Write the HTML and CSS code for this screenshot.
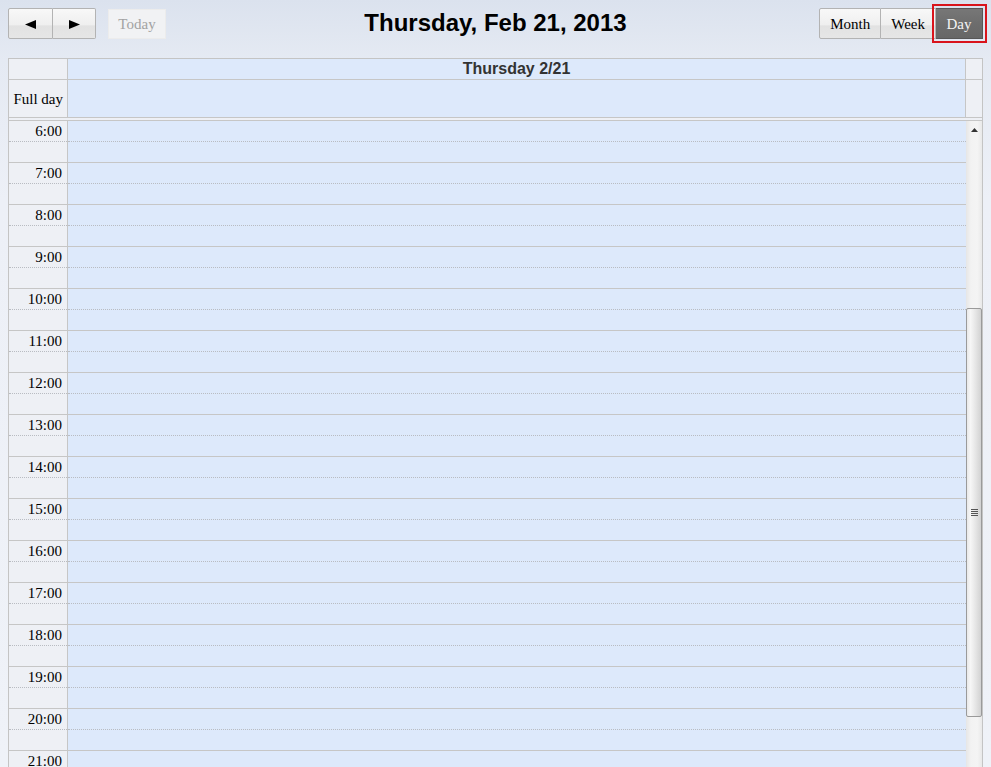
FILE: index.html
```html
<!DOCTYPE html>
<html>
<head>
<meta charset="utf-8">
<title>Calendar</title>
<link rel="stylesheet" href="styles.css">
</head>
<body>
<div class="app">
  <div class="toolbar">
    <div class="tb-left">
      <div class="group">
        <button class="btn nav"><svg width="11" height="9" viewBox="0 0 11 9"><polygon points="0,4.5 11,0 11,9" fill="#000"/></svg></button>
        <button class="btn nav"><svg width="11" height="9" viewBox="0 0 11 9"><polygon points="11,4.5 0,0 0,9" fill="#000"/></svg></button>
      </div>
      <button class="btn today" disabled>Today</button>
    </div>
    <h1 class="title">Thursday, Feb 21, 2013</h1>
    <div class="tb-right">
      <div class="group">
        <button class="btn">Month</button>
        <button class="btn">Week</button>
        <button class="btn active">Day</button>
      </div>
    </div>
  </div>

  <div class="cal">
    <div class="head">
      <div class="cell corner"></div>
      <div class="cell dayhead">Thursday 2/21</div>
      <div class="cell gutter"></div>
      <div class="cell fulllabel">Full day</div>
      <div class="cell fullday"></div>
      <div class="cell gutter"></div>
    </div>
    <div class="sep"></div>
    <div class="body">
      <div class="hours">
        <div class="hour"><div class="tcell"><div class="half">6:00</div><div class="half2"></div></div><div class="dcell"><div class="half"></div><div class="half2"></div></div></div>
        <div class="hour"><div class="tcell"><div class="half">7:00</div><div class="half2"></div></div><div class="dcell"><div class="half"></div><div class="half2"></div></div></div>
        <div class="hour"><div class="tcell"><div class="half">8:00</div><div class="half2"></div></div><div class="dcell"><div class="half"></div><div class="half2"></div></div></div>
        <div class="hour"><div class="tcell"><div class="half">9:00</div><div class="half2"></div></div><div class="dcell"><div class="half"></div><div class="half2"></div></div></div>
        <div class="hour"><div class="tcell"><div class="half">10:00</div><div class="half2"></div></div><div class="dcell"><div class="half"></div><div class="half2"></div></div></div>
        <div class="hour"><div class="tcell"><div class="half">11:00</div><div class="half2"></div></div><div class="dcell"><div class="half"></div><div class="half2"></div></div></div>
        <div class="hour"><div class="tcell"><div class="half">12:00</div><div class="half2"></div></div><div class="dcell"><div class="half"></div><div class="half2"></div></div></div>
        <div class="hour"><div class="tcell"><div class="half">13:00</div><div class="half2"></div></div><div class="dcell"><div class="half"></div><div class="half2"></div></div></div>
        <div class="hour"><div class="tcell"><div class="half">14:00</div><div class="half2"></div></div><div class="dcell"><div class="half"></div><div class="half2"></div></div></div>
        <div class="hour"><div class="tcell"><div class="half">15:00</div><div class="half2"></div></div><div class="dcell"><div class="half"></div><div class="half2"></div></div></div>
        <div class="hour"><div class="tcell"><div class="half">16:00</div><div class="half2"></div></div><div class="dcell"><div class="half"></div><div class="half2"></div></div></div>
        <div class="hour"><div class="tcell"><div class="half">17:00</div><div class="half2"></div></div><div class="dcell"><div class="half"></div><div class="half2"></div></div></div>
        <div class="hour"><div class="tcell"><div class="half">18:00</div><div class="half2"></div></div><div class="dcell"><div class="half"></div><div class="half2"></div></div></div>
        <div class="hour"><div class="tcell"><div class="half">19:00</div><div class="half2"></div></div><div class="dcell"><div class="half"></div><div class="half2"></div></div></div>
        <div class="hour"><div class="tcell"><div class="half">20:00</div><div class="half2"></div></div><div class="dcell"><div class="half"></div><div class="half2"></div></div></div>
        <div class="hour"><div class="tcell"><div class="half">21:00</div><div class="half2"></div></div><div class="dcell"><div class="half"></div><div class="half2"></div></div></div>
      </div>
      <div class="scrollbar">
        <div class="sb-up"><svg width="7" height="4" viewBox="0 0 7 4"><polygon points="3.5,0 7,4 0,4" fill="#333"/></svg></div>
        <div class="sb-track1"></div>
        <div class="sb-thumb"><div class="grip"><span></span><span></span><span></span><span></span></div></div>
        <div class="sb-track2"></div>
      </div>
    </div>
  </div>
</div>
</body>
</html>
```

FILE: styles.css
```css
html, body {
  margin: 0;
  padding: 0;
  height: 767px;
  overflow: hidden;
}
body {
  background: linear-gradient(180deg, #dbe2ee 0px, #e5eaf3 60px, #edf0f7 200px, #eff2f8 100%);
  font-family: "Liberation Serif", "Times New Roman", serif;
  font-size: 15px;
  color: #000;
}
.app {
  padding: 0 8px;
}
.toolbar {
  display: grid;
  grid-template-columns: 1fr auto 1fr;
  align-items: start;
  padding-top: 8px;
  box-sizing: border-box;
  height: 58px;
}
.tb-left {
  display: flex;
  align-items: flex-start;
  gap: 12px;
}
.tb-right {
  display: flex;
  justify-content: flex-end;
}
.group {
  display: flex;
}
.btn {
  height: 31px;
  margin: 0;
  padding: 1px 10px 0;
  border: 1px solid #b3b3b3;
  background: linear-gradient(180deg, #f8f8f8 0%, #efefef 55%, #e2e2e2 58%, #e6e6e6 100%);
  font-family: "Liberation Serif", "Times New Roman", serif;
  font-size: 15px;
  color: #000;
  display: flex;
  align-items: center;
  justify-content: center;
  box-sizing: border-box;
}
.group .btn + .btn {
  border-left: none;
}
.group .btn:first-child {
  border-radius: 2px 0 0 2px;
}
.btn.nav:first-child {
  width: 45px;
}
.btn.nav:last-child {
  width: 43px;
  border-radius: 0 2px 2px 0;
}
.btn.today {
  width: 58px;
  height: 30px;
  margin-top: 1px;
  border: 1px solid #ececec;
  background: #f1f2f4;
  color: #a2a2a2;
}
.btn.active {
  background: linear-gradient(180deg, #777 0%, #6d6d6d 50%, #676767 100%);
  border: 1px solid #575757;
  border-radius: 0;
  color: #f4f4f4;
  outline: 2px solid #d9141c;
  outline-offset: 2px;
  width: 47px;
}
.title {
  margin: 0;
  font-family: "Liberation Sans", Arial, sans-serif;
  font-size: 24px;
  font-weight: bold;
  line-height: 30px;
  color: #000;
}

.cal {
  border: 1px solid #c4c4c4;
  border-bottom: none;
  background: #eef0f5;
}
.head {
  display: grid;
  grid-template-columns: 59px 1fr 16px;
  grid-template-rows: 21px 38px;
}
.cell {
  border-right: 1px solid #c6c6c6;
  border-bottom: 1px solid #c6c6c6;
}
.cell.gutter {
  border-right: none;
  background: #eef0f5;
}
.corner {
  background: #eef0f5;
}
.dayhead {
  background: #dde9fb;
  font-family: "Liberation Sans", Arial, sans-serif;
  font-weight: bold;
  font-size: 16px;
  color: #333;
  text-align: center;
  line-height: 20px;
}
.fulllabel {
  background: #eef0f5;
  text-align: right;
  padding-right: 4px;
  line-height: 38px;
}
.fullday {
  background: #dde9fb;
}
.sep {
  height: 2px;
  background: #eef0f5;
  border-bottom: 1px solid #c6c6c6;
}
.body {
  display: flex;
  height: 660px;
}
.hours {
  flex: 1;
}
.hour {
  display: grid;
  grid-template-columns: 59px 1fr;
  border-bottom: 1px solid #c6c6c6;
}
.tcell {
  border-right: 1px solid #c6c6c6;
  background: #eef0f5;
}
.dcell {
  background: #dde9fb;
}
.half {
  height: 20px;
  border-bottom: 1px dotted #b9bcc2;
}
.half2 {
  height: 20px;
}
.tcell .half {
  text-align: right;
  padding-right: 5px;
  line-height: 17px;
  height: 18px;
  padding-top: 2px;
}
.scrollbar {
  width: 16px;
  display: flex;
  flex-direction: column;
  background: linear-gradient(90deg, #e6e6e6 0%, #f2f2f2 30%, #f4f4f4 70%, #e9e9e9 100%);
}
.sb-up {
  height: 17px;
  display: flex;
  align-items: center;
  justify-content: center;
}
.sb-track1 {
  height: 170px;
}
.sb-thumb {
  height: 409px;
  border: 1px solid #9a9a9a;
  border-radius: 2px;
  box-sizing: border-box;
  background: linear-gradient(90deg, #e9e9e9 0%, #f6f6f6 25%, #e6e6e6 60%, #d2d2d2 100%);
  display: flex;
  align-items: center;
  justify-content: center;
}
.grip {
  display: flex;
  flex-direction: column;
  gap: 1px;
}
.grip span {
  display: block;
  width: 7px;
  height: 1px;
  background: #555;
}
.sb-track2 {
  flex: 1;
}
```
